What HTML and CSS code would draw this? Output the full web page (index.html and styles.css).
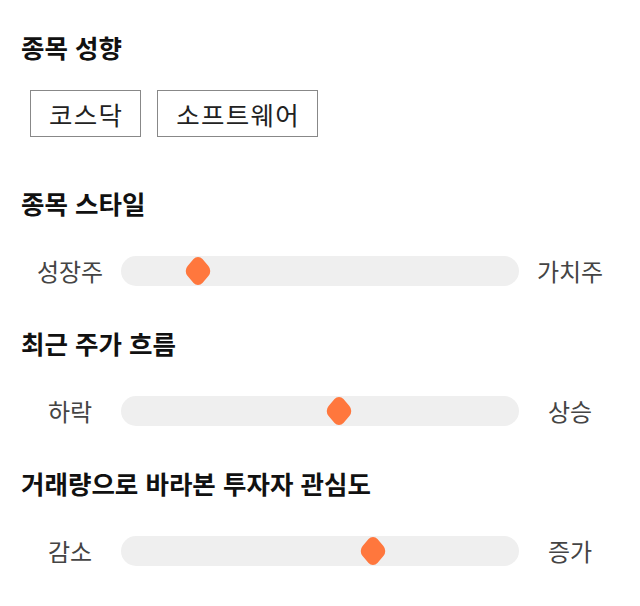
FILE: index.html
```html
<!DOCTYPE html>
<html lang="ko">
<head>
<meta charset="utf-8">
<link rel="stylesheet" href="styles.css">
</head>
<body>
  <section class="group">
    <h2 class="title">종목 성향</h2>
    <div class="tags">
      <span class="tag">코스닥</span>
      <span class="tag">소프트웨어</span>
    </div>
  </section>

  <section class="group">
    <h2 class="title">종목 스타일</h2>
    <div class="scale">
      <span class="label">성장주</span>
      <div class="track"><span class="thumb" style="left: 19.4%"></span></div>
      <span class="label">가치주</span>
    </div>
  </section>

  <section class="group">
    <h2 class="title">최근 주가 흐름</h2>
    <div class="scale">
      <span class="label">하락</span>
      <div class="track"><span class="thumb" style="left: 54.8%"></span></div>
      <span class="label">상승</span>
    </div>
  </section>

  <section class="group">
    <h2 class="title">거래량으로 바라본 투자자 관심도</h2>
    <div class="scale">
      <span class="label">감소</span>
      <div class="track"><span class="thumb" style="left: 63.3%"></span></div>
      <span class="label">증가</span>
    </div>
  </section>
</body>
</html>
```

FILE: styles.css
```css
html, body {
  margin: 0;
  padding: 0;
  background: #ffffff;
}

body {
  padding: 32px 20px 0 20px;
  font-family: "Noto Sans CJK KR", "Noto Sans", sans-serif;
  color: #111;
}

.group {
  display: flex;
  flex-direction: column;
}

.title {
  margin: 0;
  font-size: 25.5px;
  line-height: 30px;
  font-weight: 700;
  color: #111;
  padding-left: 1px;
}

.tags {
  display: flex;
  gap: 16px;
  margin: 28px 0 51px 10px;
}

.tag {
  display: inline-flex;
  align-items: center;
  height: 47px;
  box-sizing: border-box;
  padding: 0 17px 0 18px;
  border: 1px solid #888;
  font-size: 25.5px;
  letter-spacing: 1.3px;
  color: #222;
}

.scale {
  display: grid;
  grid-template-columns: 100px 1fr 100px;
  align-items: center;
  margin: 38px 0 42px 0;
  height: 30px;
}

.label {
  text-align: center;
  font-size: 24px;
  line-height: 30px;
  color: #444;
}

.track {
  position: relative;
  height: 30px;
  margin-left: 1px;
  margin-right: 1px;
  background: #efefef;
  border-radius: 15px;
}

.thumb {
  position: absolute;
  top: 50%;
  width: 20px;
  height: 20px;
  margin-left: -10px;
  margin-top: -10px;
  background: #ff773d;
  border-radius: 6px;
  transform: scale(1.05, 1.2) rotate(45deg);
}
```
